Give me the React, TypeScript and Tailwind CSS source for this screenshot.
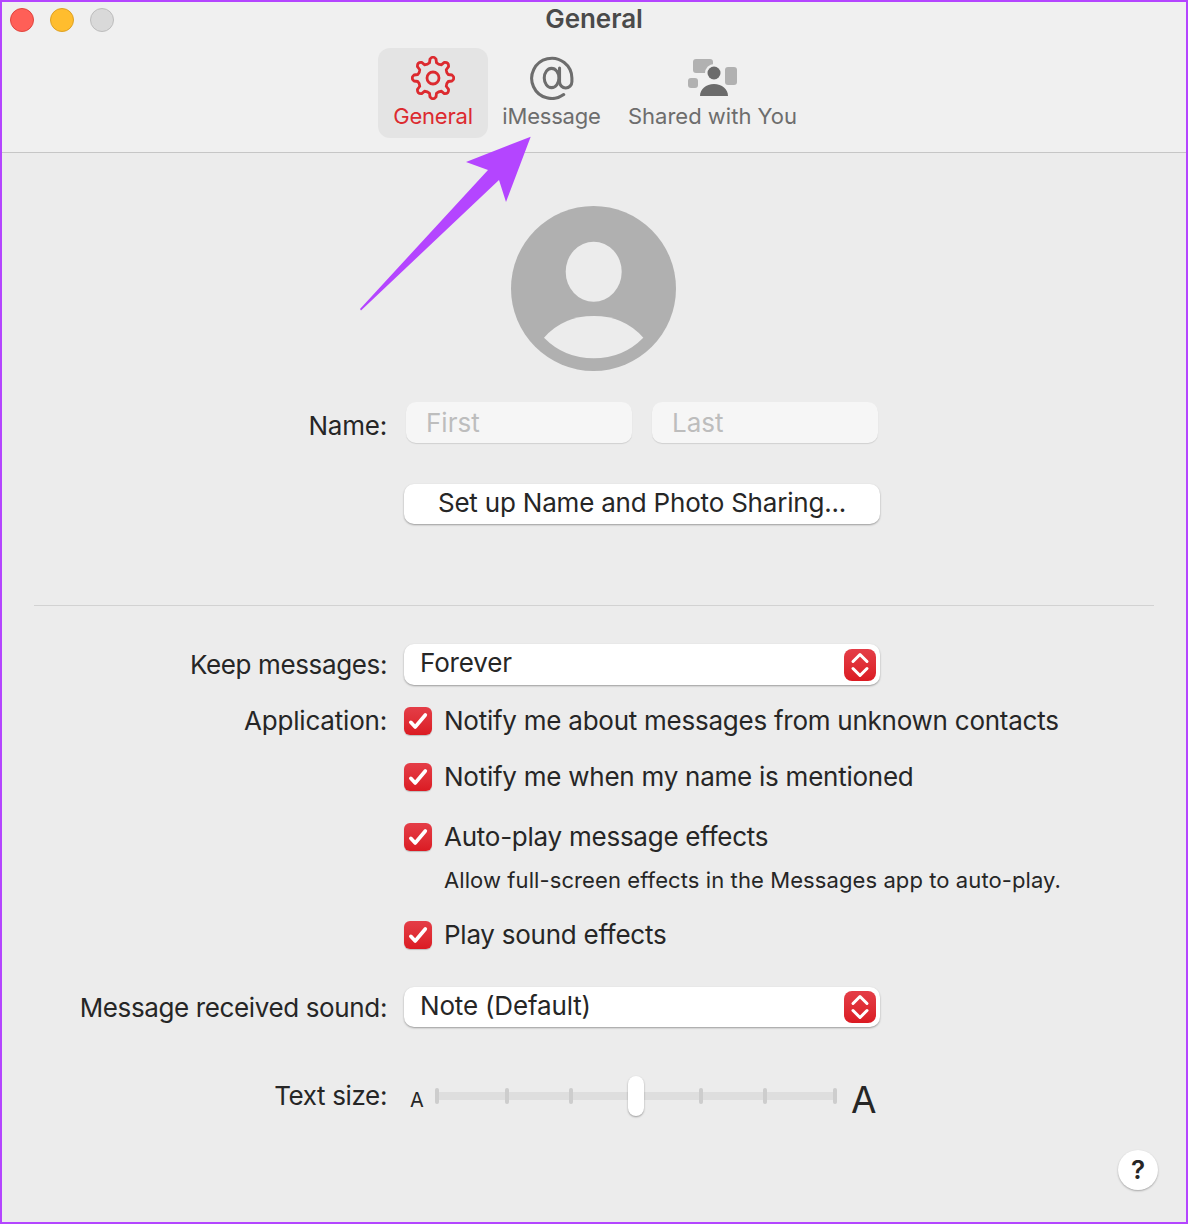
import { ChevronDown, ChevronUp } from 'lucide-react';

const FONT = "font-['Inter','Liberation_Sans',sans-serif]";

// 8-tooth gear outline, centred on 22,22
function gearPath() {
  const pt = (deg: number, r: number) => {
    const a = ((deg - 90) * Math.PI) / 180;
    return `${(22 + r * Math.cos(a)).toFixed(2)} ${(22 + r * Math.sin(a)).toFixed(2)}`;
  };
  let d = '';
  for (let i = 0; i < 8; i++) {
    const a = i * 45;
    d += `${i === 0 ? 'M' : 'L'}${pt(a - 13, 15.6)} L${pt(a - 9, 19.2)} Q${pt(a, 22.6)} ${pt(a + 9, 19.2)} L${pt(a + 13, 15.6)} Q${pt(a + 22.5, 14.4)} ${pt(a + 32, 15.6)} `;
  }
  return d + 'Z';
}

function GearIcon() {
  return (
    <svg width="44" height="44" viewBox="0 0 44 44" fill="none" stroke="#dc2a2f" strokeWidth="2.8" strokeLinejoin="round">
      <path d={gearPath()} />
      <circle cx="22" cy="22" r="6" />
    </svg>
  );
}

function AtIcon() {
  return (
    <svg width="44" height="44" viewBox="1.5 1.5 21 21" fill="none" stroke="#6d6d6d" strokeWidth="1.45" strokeLinecap="round">
      <ellipse cx="11.8" cy="12" rx="3.5" ry="4.6" />
      <path d="M15.6 7.2v6.6a2.9 2.9 0 0 0 5.9 0v-1.8a9.6 9.6 0 1 0-3.9 7.9" />
    </svg>
  );
}

function SharedIcon() {
  return (
    <svg width="50" height="40" viewBox="0 0 50 40">
      <rect x="5" y="1" width="20" height="14" rx="3" fill="#b1b1b1" />
      <rect x="37" y="9" width="12" height="18" rx="3" fill="#b1b1b1" />
      <rect x="0" y="20" width="10" height="10" rx="3" fill="#b1b1b1" />
      <circle cx="26" cy="15" r="9" fill="#f0f0f0" />
      <circle cx="26" cy="15" r="6.5" fill="#6b6b6b" />
      <path d="M12 38c0-7 6-12 14-12s14 5 14 12z" fill="#6b6b6b" />
    </svg>
  );
}

function Avatar() {
  return (
    <svg width="165" height="165" viewBox="0 0 165 165">
      <circle cx="82.5" cy="82.5" r="82.5" fill="#b0b0b0" />
      <ellipse cx="82.7" cy="65.7" rx="28" ry="30" fill="#ececec" />
      <path d="M33 131.7Q52 110 82.7 110T132.3 131.7Q112 152.3 82.7 152.3T33 131.7Z" fill="#ececec" />
    </svg>
  );
}

function Row({ label, children, className = '', labelClass = 'tracking-[-0.37px]' }: { label?: string; children: React.ReactNode; className?: string; labelClass?: string }) {
  return (
    <div className={`flex items-center ${className}`}>
      <div className={`w-[385px] shrink-0 text-right text-[26px] leading-[28px] text-[#262626] ${labelClass}`}>{label}</div>
      <div className="ml-[17px] flex flex-1 items-center">{children}</div>
    </div>
  );
}

function Select({ value, heightClass }: { value: string; heightClass: string }) {
  return (
    <div className={`flex ${heightClass} w-[476px] items-center justify-between rounded-[10px] bg-white pl-[16px] pr-[4px] shadow-[0_1px_2px_rgba(0,0,0,0.35)]`}>
      <span className="-mt-[3px] text-[26px] leading-[28px] text-[#262626] tracking-[-0.17px]">{value}</span>
      <div className="flex h-[32px] w-[32px] flex-col items-center justify-center rounded-[8px] bg-linear-to-b from-[#e43d47] to-[#db1a22]">
        <ChevronUp size={28} strokeWidth={2.6} className="-mb-[7px] shrink-0 text-white" />
        <ChevronDown size={28} strokeWidth={2.6} className="-mt-[7px] shrink-0 text-white" />
      </div>
    </div>
  );
}

function CheckRow({ text, label, className = '' }: { text: string; label?: string; className?: string }) {
  return (
    <Row label={label} className={className} labelClass="tracking-[-0.2px]">
      <div className="flex h-[28px] w-[28px] items-center justify-center rounded-[6px] bg-linear-to-b from-[#e43d47] to-[#db1a22] shadow-[0_1px_1px_rgba(0,0,0,0.2)]">
        <svg width="28" height="28" viewBox="0 0 28 28" fill="none" stroke="#fff" strokeWidth="3.6" strokeLinecap="round" strokeLinejoin="round">
          <path d="M6.8 15.3L11.2 20L21.3 8" />
        </svg>
      </div>
      <span className="ml-[12px] whitespace-nowrap text-[26px] leading-[28px] text-[#262626] tracking-[-0.25px]">{text}</span>
    </Row>
  );
}

const TICKS_LEFT = ['w-[66px]', 'w-[60px]'];
const TICKS_RIGHT = ['w-[60px]', 'w-[66px]'];

function Tick() {
  return <div className="h-[16px] w-[4px] shrink-0 rounded-[2px] bg-[#cdcdcd]" />;
}

function Slider() {
  return (
    <div className="relative flex h-[40px] w-[404px] items-center">
      <Tick />
      {TICKS_LEFT.map((w) => (
        <div key={w} className="flex items-center">
          <div className={`h-[8px] ${w} bg-[#dedede]`} />
          <Tick />
        </div>
      ))}
      <div className="h-[8px] w-[126px] bg-[#dedede]" />
      <Tick />
      {TICKS_RIGHT.map((w) => (
        <div key={w} className="flex items-center">
          <div className={`h-[8px] ${w} bg-[#dedede]`} />
          <Tick />
        </div>
      ))}
      <div className="absolute left-[193px] top-0 h-[40px] w-[16px] rounded-full bg-white shadow-[0_1px_2px_rgba(0,0,0,0.35)]" />
    </div>
  );
}

export default function App() {
  return (
    <div className={`relative h-[1224px] w-[1188px] overflow-hidden border-2 border-[#b445ff] bg-[#ececec] ${FONT}`}>
      <header className="h-[151px] border-b border-[#c6c6c6] bg-[#f0f0f0]">
        <div className="flex h-[34px] items-center">
          <div className="flex flex-1 gap-[16px] pl-[8px] pt-[2px]">
            <div className="h-[24px] w-[24px] rounded-full border border-[#e0443e] bg-[#ff5f57]" />
            <div className="h-[24px] w-[24px] rounded-full border border-[#dea123] bg-[#ffbd2e]" />
            <div className="h-[24px] w-[24px] rounded-full border border-[#bdbdbd] bg-[#d9d9d9]" />
          </div>
          <div className="text-[26px] leading-[34px] font-semibold text-[#4a4a4a] tracking-[-0.05px]">General</div>
          <div className="flex-1 pl-[8px]" />
        </div>
        <div className="mt-[12px] flex justify-center">
          <div className="flex h-[90px] w-[110px] flex-col items-center rounded-[12px] bg-[#e4e4e4] pt-[8px]">
            <GearIcon />
            <span className="mt-[2px] text-[22px] leading-[28px] text-[#dc2a2f] tracking-[-0.2px]">General</span>
          </div>
          <div className="flex h-[90px] w-[127px] flex-col items-center pt-[8px]">
            <AtIcon />
            <span className="mt-[2px] text-[22px] leading-[28px] text-[#6d6d6d] tracking-[-0.2px]">iMessage</span>
          </div>
          <div className="flex h-[90px] w-[195px] flex-col items-center pt-[10px]">
            <SharedIcon />
            <span className="mt-[4px] text-[22px] leading-[28px] text-[#6d6d6d]">Shared with You</span>
          </div>
        </div>
      </header>

      <div className="mt-[53px] flex justify-center pr-[2px]">
        <Avatar />
      </div>

      <Row label="Name:" className="mt-[31px]" labelClass="pt-[6px] tracking-[-0.2px]">
        <div className="ml-[2px] flex gap-[20px]">
          <div className="flex h-[41px] w-[226px] items-center rounded-[10px] bg-[#f6f6f6] pl-[20px] text-[26px] text-[#bdbdbd] shadow-[0_1px_1px_rgba(0,0,0,0.12)]">First</div>
          <div className="flex h-[41px] w-[226px] items-center rounded-[10px] bg-[#f6f6f6] pl-[20px] text-[26px] text-[#bdbdbd] shadow-[0_1px_1px_rgba(0,0,0,0.12)]">Last</div>
        </div>
      </Row>

      <Row className="mt-[41px]">
        <div className="flex h-[40px] w-[476px] items-center justify-center rounded-[10px] bg-white pb-[2px] text-[26px] leading-[28px] text-[#262626] tracking-[-0.2px] shadow-[0_1px_2px_rgba(0,0,0,0.35)]">
          Set up Name and Photo Sharing...
        </div>
      </Row>

      <div className="mx-[32px] mt-[81px] h-px bg-[#d2d2d2]" />

      <Row label="Keep messages:" className="mt-[38px]">
        <Select value="Forever" heightClass="h-[41px]" />
      </Row>

      <CheckRow label="Application:" text="Notify me about messages from unknown contacts" className="mt-[22px]" />
      <CheckRow text="Notify me when my name is mentioned" className="mt-[28px]" />
      <CheckRow text="Auto-play message effects" className="mt-[32px]" />
      <Row className="mt-[17px] h-[24px]">
        <span className="ml-[40px] whitespace-nowrap text-[22px] leading-[24px] text-[#262626] tracking-[0.09px]">Allow full-screen effects in the Messages app to auto-play.</span>
      </Row>
      <CheckRow text="Play sound effects" className="mt-[29px]" />

      <Row label="Message received sound:" className="mt-[38px]" labelClass="pt-[2px] tracking-[-0.37px]">
        <Select value="Note (Default)" heightClass="h-[40px]" />
      </Row>

      <Row label="Text size:" className="mt-[49px]">
        <span className="ml-[6px] w-[25px] translate-y-[4px] text-[20px] leading-none text-[#262626]">A</span>
        <Slider />
        <span className="ml-[12px] translate-y-[3px] text-[37px] leading-none text-[#262626]">A</span>
      </Row>

      <div className="mt-[34px] flex justify-end pr-[28px]">
        <div className="flex h-[40px] w-[40px] items-center justify-center rounded-full bg-white text-[26px] leading-none font-semibold text-[#262626] shadow-[0_1px_2px_rgba(0,0,0,0.3)]">?</div>
      </div>

      {/* annotation arrow over the window */}
      <svg className="absolute -left-[2px] -top-[2px]" width="1188" height="1224" viewBox="0 0 1188 1224" fill="#b445ff">
        <path d="M530.7 136.7L466 162L488 170L360 309L361 310.5L499 180L506 202Z" />
      </svg>
    </div>
  );
}
